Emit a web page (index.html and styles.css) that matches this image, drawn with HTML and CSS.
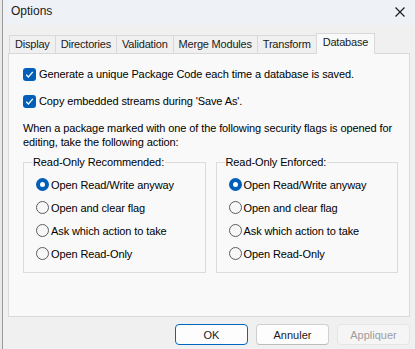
FILE: index.html
```html
<!DOCTYPE html>
<html lang="en">
<head>
  <meta charset="UTF-8" />
  <title>Options</title>
  <link rel="stylesheet" href="styles.css">
</head>
<body>
  <div class="window">
    <div class="titlebar">
      <span class="title">Options</span>
      <svg class="close" width="10" height="10" viewBox="0 0 10 10">
        <path d="M0.5 0.5 L9.5 9.5 M9.5 0.5 L0.5 9.5" stroke="#1a1a1a" stroke-width="1.1" fill="none" />
      </svg>
    </div>

    <div class="tabs">
      <div class="tab">Display</div>
      <div class="tab">Directories</div>
      <div class="tab">Validation</div>
      <div class="tab">Merge Modules</div>
      <div class="tab">Transform</div>
      <div class="tab active">Database</div>
    </div>

    <div class="panel">
      <label class="check-row">
        <span class="checkbox">
          <svg width="9" height="9" viewBox="0 0 9 9"><path d="M1.2 4.8 L3.4 7 L7.8 1.8" stroke="#fff" stroke-width="1.3" fill="none" /></svg>
        </span>
        Generate a unique Package Code each time a database is saved.
      </label>
      <label class="check-row">
        <span class="checkbox">
          <svg width="9" height="9" viewBox="0 0 9 9"><path d="M1.2 4.8 L3.4 7 L7.8 1.8" stroke="#fff" stroke-width="1.3" fill="none" /></svg>
        </span>
        Copy embedded streams during 'Save As'.
      </label>

      <p class="note">When a package marked with one of the following security flags is opened for editing, take the following action:</p>

      <div class="groups">
        <fieldset class="group">
          <legend>Read-Only Recommended:</legend>
          <div class="radio-row"><span class="radio on"></span>Open Read/Write anyway</div>
          <div class="radio-row"><span class="radio"></span>Open and clear flag</div>
          <div class="radio-row"><span class="radio"></span>Ask which action to take</div>
          <div class="radio-row"><span class="radio"></span>Open Read-Only</div>
        </fieldset>
        <fieldset class="group">
          <legend>Read-Only Enforced:</legend>
          <div class="radio-row"><span class="radio on"></span>Open Read/Write anyway</div>
          <div class="radio-row"><span class="radio"></span>Open and clear flag</div>
          <div class="radio-row"><span class="radio"></span>Ask which action to take</div>
          <div class="radio-row"><span class="radio"></span>Open Read-Only</div>
        </fieldset>
      </div>
    </div>

    <div class="buttons">
      <button class="btn default">OK</button>
      <button class="btn">Annuler</button>
      <button class="btn" disabled>Appliquer</button>
    </div>
  </div>
</body>
</html>
```

FILE: styles.css
```css
html, body {
  margin: 0;
  padding: 0;
  height: 100%;
}
body {
  background-color: #e9e9e9;
  font-family: "Liberation Sans", Arial, sans-serif;
  font-size: 11px;
  letter-spacing: -0.1px;
  color: #000;
  overflow: hidden;
}
.window {
  margin-left: 2px;
  height: 100%;
  box-sizing: border-box;
  border-left: 1px solid #9a9a9a;
  background-color: #f0f0f0;
}
.titlebar {
  height: 25px;
  display: flex;
  align-items: center;
  justify-content: space-between;
  padding: 0 10px 3px 8px;
  background-color: #eef1f5;
  box-sizing: border-box;
  letter-spacing: 0;
}
.title {
  font-size: 12px;
  color: #1a1a1a;
}
.close {
  margin-top: 1px;
}
/* onglets */
.tabs {
  display: flex;
  align-items: flex-end;
  height: 20px;
  margin: 8px 0 0 6px;
  letter-spacing: -0.2px;
}
.tab {
  height: 18px;
  line-height: 17px;
  padding: 0 5px;
  border: 1px solid #d9d9d9;
  border-bottom: none;
  margin-right: -1px;
  background-color: #f0f0f0;
  box-sizing: border-box;
  white-space: nowrap;
  color: #1a1a1a;
}
.tab.active {
  height: 21px;
  line-height: 17px;
  padding: 0 6px;
  margin-bottom: -1px;
  background-color: #f9f9f9;
  position: relative;
  z-index: 1;
}
.panel {
  margin: 0 5px 0 5px;
  height: 264px;
  box-sizing: border-box;
  border: 1px solid #d9d9d9;
  background-color: #f9f9f9;
  padding: 13px 11px 0 14px;
}
.check-row {
  display: flex;
  align-items: center;
  height: 14px;
  margin-bottom: 13px;
  white-space: nowrap;
}
.checkbox {
  width: 13px;
  height: 13px;
  border-radius: 3px;
  background-color: #005fb8;
  margin-right: 3px;
  display: flex;
  align-items: center;
  justify-content: center;
  flex-shrink: 0;
}
.note {
  margin: 0;
  line-height: 14px;
}
/* cadres Read-Only */
.groups {
  display: flex;
  gap: 10px;
  margin-top: 6px;
}
.group {
  flex: 1;
  margin: 0;
  padding: 4px 0 7px 12px;
  border: 1px solid #dcdcdc;
  min-width: 0;
}
.group legend {
  padding: 0 1px;
  margin-left: -4px;
  line-height: 14px;
}
.radio-row {
  display: flex;
  align-items: center;
  height: 23px;
  white-space: nowrap;
}
.radio {
  width: 13px;
  height: 13px;
  box-sizing: border-box;
  border-radius: 50%;
  border: 1px solid #5d5d5d;
  background-color: #f7f7f7;
  margin-right: 2px;
  flex-shrink: 0;
}
.radio.on {
  border: 4px solid #005fb8;
  background-color: #fff;
}
.buttons {
  display: flex;
  justify-content: flex-end;
  gap: 8px;
  margin: 7px 5px 0 0;
}
.btn {
  font-family: "Liberation Sans", Arial, sans-serif;
  font-size: 11px;
  width: 73px;
  height: 21px;
  padding: 0;
  border: 1px solid #d0d0d0;
  border-bottom-color: #bcbcbc;
  border-radius: 4px;
  background-color: #fdfdfd;
  color: #1a1a1a;
}
.btn.default {
  border: 1px solid #0067c0;
}
.btn:disabled {
  background-color: #f5f5f5;
  border-color: #e5e5e5;
  color: #9d9d9d;
}
```
